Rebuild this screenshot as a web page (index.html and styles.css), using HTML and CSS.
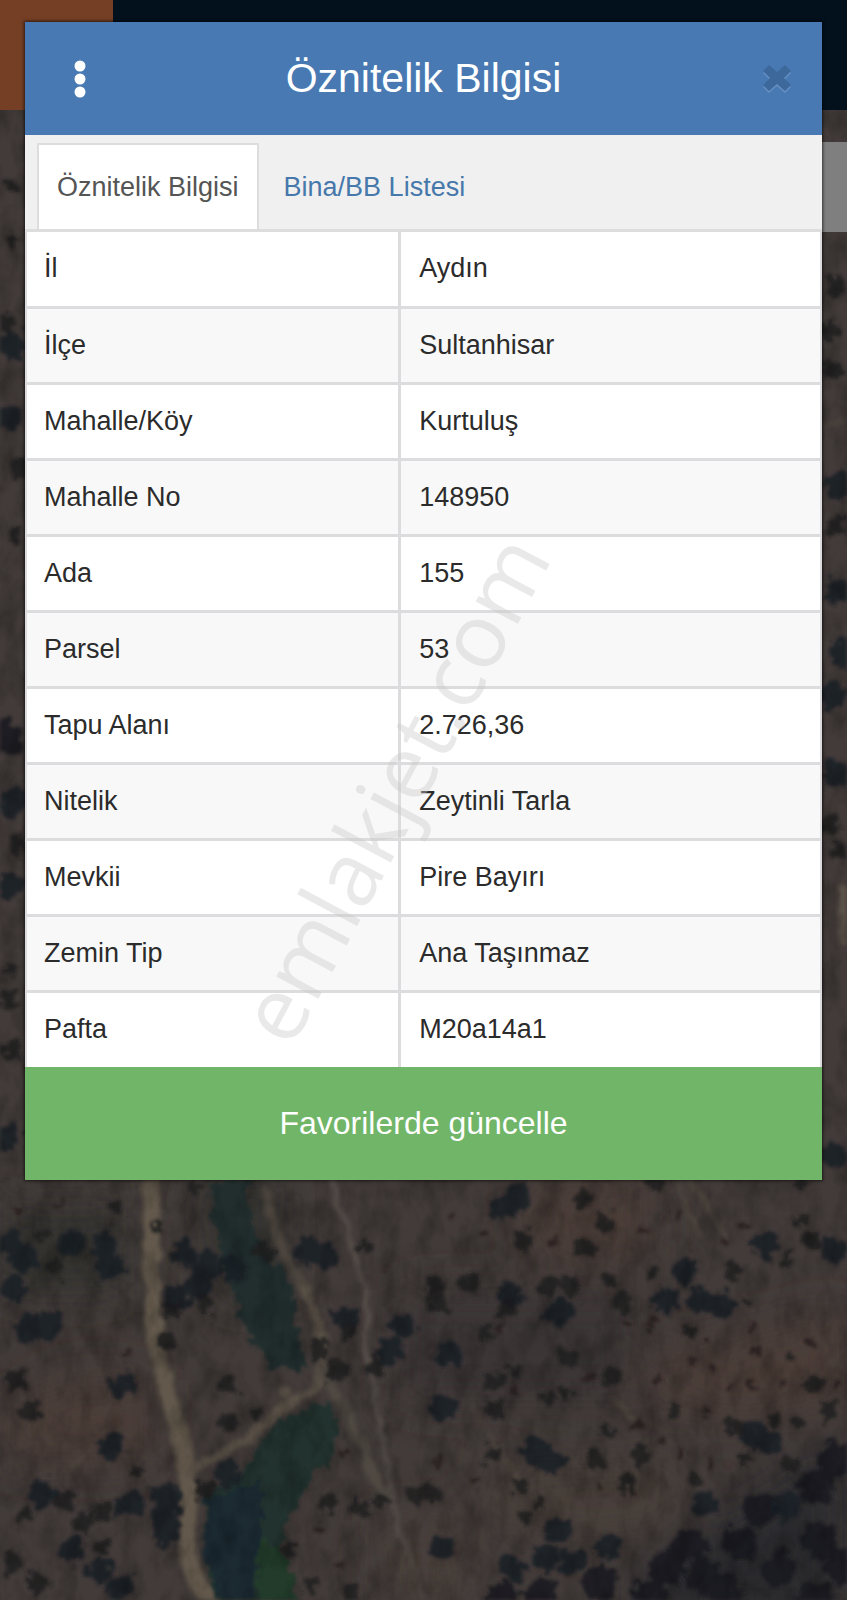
FILE: index.html
```
<!DOCTYPE html>
<html lang="tr">
<head>
    <meta charset="utf-8">
    <meta name="viewport" content="width=device-width, initial-scale=1">
    <title>Öznitelik Bilgisi</title>
    <link rel="stylesheet" href="styles.css">
</head>
<body>
    <div class="page">
        <div class="backdrop">
            <svg class="map" viewBox="0 0 847 1600" preserveAspectRatio="xMidYMin slice" aria-hidden="true">
                <defs>
                    <filter id="rough" x="0" y="0" width="847" height="1600" filterUnits="userSpaceOnUse">
                        <feTurbulence type="fractalNoise" baseFrequency="0.09" numOctaves="3" seed="4" result="n"/>
                        <feDisplacementMap in="SourceGraphic" in2="n" scale="20" xChannelSelector="R" yChannelSelector="G"/>
                        <feGaussianBlur stdDeviation="1.4"/>
                    </filter>
                    <filter id="soft" x="0" y="0" width="847" height="1600" filterUnits="userSpaceOnUse">
                        <feTurbulence type="fractalNoise" baseFrequency="0.05" numOctaves="2" seed="9" result="n"/>
                        <feDisplacementMap in="SourceGraphic" in2="n" scale="12" xChannelSelector="R" yChannelSelector="G"/>
                        <feGaussianBlur stdDeviation="2"/>
                    </filter>
                    <filter id="blur" x="0" y="0" width="847" height="1600" filterUnits="userSpaceOnUse">
                        <feGaussianBlur stdDeviation="24"/>
                    </filter>
                    <filter id="grain" x="0" y="0" width="100%" height="100%">
                        <feTurbulence type="fractalNoise" baseFrequency="0.05 0.03" numOctaves="4" seed="2"/>
                        <feColorMatrix values="0 0 0 0 0  0 0 0 0 0  0 0 0 0 0  1.6 0 0 0 -0.6"/>
                    </filter>
                </defs>
                <rect width="847" height="1600" fill="#423b39"/>
                <!-- soil tones -->
                <g filter="url(#blur)">
                    <path fill="#4b3e39" d="M620 1370L847 1310V1400L740 1420L640 1400zM60 1380H150V1460H0V1420zM520 1180H650V1260H540z"/>
                    <path fill="#48403a" d="M490 1470L680 1460L690 1520L600 1540L480 1520zM380 1520H470V1600H380z"/>
                    <path fill="#3a3635" d="M400 1290H640V1400H400z"/>
                    <path fill="#2a2b2f" d="M650 1560L847 1440V1620H620z"/>
                    <path fill="#33332f" d="M0 1210H130V1290H0zM200 1180H280V1300H220z"/>
                </g>
                <!-- roads and paths -->
                <g class="road" filter="url(#soft)">
                    <path stroke="#62584b" stroke-width="17" d="M152 1170V1310Q156 1350 170 1400Q186 1450 188 1490V1560Q192 1580 216 1606"/>
                    <path stroke="#5a5146" stroke-width="9" d="M190 1476Q210 1454 250 1440Q276 1406 314 1390L324 1370Q322 1320 300 1280"/>
                    <path stroke="#4c443c" stroke-width="9" d="M300 1280Q276 1250 268 1190"/>
                    <path stroke="#504943" stroke-width="10" d="M322 1372Q352 1420 368 1460T384 1500"/>
                    <path stroke="#544d49" stroke-width="5" d="M330 1176Q350 1240 366 1290V1350Q380 1410 388 1480Q396 1530 424 1600"/>
                    <path stroke="#50463e" stroke-width="3" d="M72 1468L98 1440M676 1180L700 1236M690 1180L724 1236M612 1398L632 1420M800 430L847 420M474 1410L518 1478"/>
                    <path stroke="#5c5349" stroke-width="14" d="M284 1391h1M846 890v50"/>
                </g>
                <!-- green gullies -->
                <g filter="url(#rough)">
                    <path fill="#222f2d" d="M210 1180H248L254 1232L292 1284L306 1370L268 1368L240 1320L214 1230z"/>
                    <path fill="#20332f" d="M324 1404L342 1420L336 1450L304 1490L278 1540L302 1606H222L204 1566L204 1496L244 1470L276 1420z"/>
                    <path fill="#1e2a33" d="M206 1500L260 1480L262 1540L250 1600H224L204 1560z"/>
                    <path fill="#243a2c" d="M262 1540L280 1548L302 1606H266L254 1580z"/>
                </g>
                <!-- trees, one dot each, grouped by crown size -->
                <g class="trees" filter="url(#rough)">
                    <path class="t1" d="M343 1452h0M437 1460h0M484 1231h0M555 1241h0M745 1225h0M676 1217h0M650 1332h0M627 1322h0M811 1343h0M752 1327h0M712 1368h0M660 1380h0M727 1387h0M753 1387h0M695 1363h0M756 1350h0M708 1413h0M661 1441h0M683 1454h0M712 1465h0M588 1378h0M516 1390h0M340 1565h0M320 1528h0M60 1206h0M600 1488h0M474 1481h0M632 1493h0M782 1382h0M837 1383h0M652 1320h0M706 1340h0M638 1424h0M450 1215h0M640 1230h0M725 1240h0M500 1330h0M20 1210h0M125 1353h0"/>
                    <path class="t2" d="M117 1206h0M157 1228h0M42 1234h0M365 1245h0M138 1470h0M382 1500h0M516 1370h0M548 1400h0M565 1394h0M606 1431h0M520 1485h0M541 1504h0M526 1518h0M690 1331h0M791 1356h0M675 1410h0M775 1419h0M798 1423h0M746 1460h0M800 1185h0M610 1280h0M652 1272h0M787 1261h0M104 1546h0M26 1514h0M310 1585h0M745 1302h0M485 1333h0M255 1415h0M12 240h0M14 535h0M10 970h0M800 1220h0M695 1480h0M195 1190h0M12 186h0"/>
                    <path class="t3" d="M14 1380h0M30 1411h0M62 1500h0M103 1512h0M85 1522h0M13 1563h0M38 1583h0M265 1253h0M228 1385h0M228 1422h0M320 1350h0M338 1370h0M348 1333h0M375 1367h0M328 1502h0M358 1508h0M415 1495h0M290 1550h0M352 1592h0M438 1305h0M435 1285h0M471 1282h0M492 1380h0M493 1408h0M492 1453h0M508 1308h0M570 1356h0M612 1375h0M595 1460h0M640 1455h0M626 1482h0M430 1493h0M582 1200h0M603 1220h0M523 1240h0M583 1248h0M655 1182h0M732 1270h0M812 1240h0M828 1410h0M735 1425h0M790 1465h0M622 1302h0M570 1285h0M550 1285h0M55 1267h0M12 1048h0M20 468h0M20 843h0M835 286h0M828 331h0M832 370h0M835 528h0M830 826h0M840 854h0M205 1490h0M167 1342h0M8 1000h0M8 324h0M812 1385h0M172 1310h0M203 1302h0"/>
                    <path class="t4" d="M123 1384h0M110 1445h0M42 1494h0M130 1505h0M72 1552h0M28 1330h0M48 1324h0M100 1572h0M122 1588h0M166 1494v40M228 1474h0M346 1318h0M402 1327h0M390 1352h0M447 1354h0M443 1407h0M535 1450l16 12M442 1548h0M512 1568h0M545 1558h0M572 1562h0M608 1547h0M558 1528h0M518 1195h0M503 1208h0M510 1295h0M560 1312h0M684 1270h0M700 1300h0M720 1304h0M665 1302h0M765 1245h0M835 1250h0M835 1155h0M8 1137h0M10 1244h0M24 1258h0M72 1244h0M105 1247h0M110 1265h0M14 1288h0M184 1254h0M208 1266h0M235 1268h0M310 1252h0M325 1256h0M176 1296h0M200 1286h0M770 1442h0M755 1434h0M785 1505h0M705 1505h0M12 345h0M8 416h0M838 486h0M838 591h0M843 654h0M832 696h0M836 773h0M12 802h0M10 886h0"/>
                    <path class="t5" d="M835 1460h0M816 1488h0M740 1543h0M690 1545h0M668 1568h0M704 1578h0M725 1590h0M820 1540h0M777 1570h0M840 1566h0M650 1596h0M600 1584h0M540 1597h0M502 1600h0M815 1600h0M760 1508h0M6 738h0"/>
                </g>
                <rect width="847" height="1600" filter="url(#grain)" opacity="0.3"/>
            </svg>
            <div class="navbar"><div class="brand"></div></div>
            <div class="map-tool"></div>
        </div>

        <main class="modal">
            <header class="modal-header">
                <button class="icon-button" type="button" aria-label="Menü">
                    <svg width="12" height="38" viewBox="0 0 12 38" fill="#fff">
                        <circle cx="6" cy="6" r="5.5"/>
                        <circle cx="6" cy="19" r="5.5"/>
                        <circle cx="6" cy="32" r="5.5"/>
                    </svg>
                </button>
                <h1>Öznitelik Bilgisi</h1>
                <button class="icon-button close" type="button" aria-label="Kapat">
                    <svg width="30" height="32" viewBox="0 0 30 32">
                        <path fill="#6490c3" d="M7 4L15 11L23 4L29 10L22 17L29 24L23 30L15 23L7 30L1 24L8 17L1 10z"/>
                        <path fill="#3c689b" d="M7 2L15 9L23 2L29 8L22 15L29 22L23 28L15 21L7 28L1 22L8 15L1 8z"/>
                    </svg>
                </button>
            </header>
            <nav class="tabs">
                <a class="tab active" href="#oznitelik">Öznitelik Bilgisi</a>
                <a class="tab" href="#bina">Bina/BB Listesi</a>
            </nav>
            <table class="info" id="oznitelik">
                <tr><th scope="row">İl</th><td>Aydın</td></tr>
                <tr><th scope="row">İlçe</th><td>Sultanhisar</td></tr>
                <tr><th scope="row">Mahalle/Köy</th><td>Kurtuluş</td></tr>
                <tr><th scope="row">Mahalle No</th><td>148950</td></tr>
                <tr><th scope="row">Ada</th><td>155</td></tr>
                <tr><th scope="row">Parsel</th><td>53</td></tr>
                <tr><th scope="row">Tapu Alanı</th><td>2.726,36</td></tr>
                <tr><th scope="row">Nitelik</th><td>Zeytinli Tarla</td></tr>
                <tr><th scope="row">Mevkii</th><td>Pire Bayırı</td></tr>
                <tr><th scope="row">Zemin Tip</th><td>Ana Taşınmaz</td></tr>
                <tr><th scope="row">Pafta</th><td>M20a14a1</td></tr>
            </table>
            <button class="favorite" type="button">Favorilerde güncelle</button>
        </main>

        <div class="watermark"><span>emlakjet.com</span></div>
    </div>
</body>
</html>
```
FILE: styles.css
```
* {
    box-sizing: border-box;
}
body {
    margin: 0;
    font-family: "Liberation Sans", Arial, Helvetica, sans-serif;
    font-size: 27px;
    color: #2b2b2b;
    background-color: #423b39;
}
.page {
    position: relative;
    min-height: 100vh;
    padding: 22px 25px;
    overflow: hidden;
}

/* darkened map page behind the dialog */
.backdrop {
    position: absolute;
    inset: 0;
}
.map {
    position: absolute;
    width: 100%;
    height: 100%;
}
.road path {
    fill: none;
    stroke-linecap: round;
}
.trees path {
    fill: none;
    stroke: #1d1d21;
    stroke-linecap: round;
    opacity: 0.85;
}
.trees .t1 {
    stroke: #28211f;
    stroke-width: 8px;
}
.trees .t2 {
    stroke: #201e1f;
    stroke-width: 13px;
}
.trees .t3 {
    stroke-width: 20px;
}
.trees .t4 {
    stroke: #1b1d24;
    stroke-width: 27px;
}
.trees .t5 {
    stroke: #181b22;
    stroke-width: 36px;
}
.navbar {
    position: relative;
    height: 110px;
    background-color: #03111d;
}
.brand {
    width: 113px;
    height: 100%;
    background-color: #753f25;
}
.map-tool {
    position: relative;
    width: 90px;
    height: 90px;
    margin: 32px 0 0 auto;
    background-color: #7f7f7f;
}

.modal {
    position: relative;
    background-color: #fff;
    box-shadow: 0 0 3px 1px rgba(0, 0, 0, 0.6);
}
.modal-header {
    display: flex;
    align-items: center;
    justify-content: space-between;
    height: 113px;
    padding: 0 20px;
    background-color: #4879b2;
}
.modal-header h1 {
    margin: 0;
    font-size: 41px;
    font-weight: normal;
    color: #fff;
}
.icon-button {
    display: flex;
    align-items: center;
    justify-content: center;
    width: 70px;
    height: 70px;
    padding: 0;
    border: 0;
    background: none;
    cursor: pointer;
}
.close {
    justify-content: flex-end;
    padding-right: 10px;
}
.tabs {
    display: flex;
    height: 97px;
    padding: 8px 12px 0;
    background-color: #f0f0f0;
    border-bottom: 3px solid #ddd;
}
.tab {
    display: flex;
    align-items: center;
    padding: 0 18px;
    border: 2px solid transparent;
    border-bottom: 0;
    color: #4678ab;
    text-decoration: none;
}
.tab + .tab {
    margin-left: 5px;
}
.tab.active {
    color: #555;
    background-color: #fff;
    border-color: #ddd;
}
.info {
    width: 100%;
    border-collapse: collapse;
    table-layout: fixed;
}
.info th,
.info td {
    height: 76px;
    padding: 0 17px;
    border: 3px solid #dcdcde;
    font-weight: normal;
    text-align: left;
}
.info th {
    width: 47%;
}
.info td {
    padding-left: 18px;
}
.info tr > :first-child {
    border-left-width: 2px;
}
.info tr > :last-child {
    border-right-width: 2px;
}
.info tr:first-child > * {
    height: 75px;
    border-top: 0;
}
.info tr:last-child > * {
    border-bottom: 0;
}
.info tr:nth-child(even) {
    background-color: #f8f8f8;
}
.favorite {
    display: block;
    width: 100%;
    height: 113px;
    border: 0;
    background-color: #71b568;
    color: #fff;
    font-family: inherit;
    font-size: 32px;
    cursor: pointer;
}

.watermark {
    position: absolute;
    inset: 0;
    display: flex;
    align-items: center;
    justify-content: center;
    padding: 0 64px 26px 0;
    pointer-events: none;
}
.watermark span {
    font-family: "Open Sans", "Noto Sans", sans-serif;
    font-size: 89px;
    color: rgba(200, 200, 200, 0.4);
    transform: rotate(-62deg);
}
```
